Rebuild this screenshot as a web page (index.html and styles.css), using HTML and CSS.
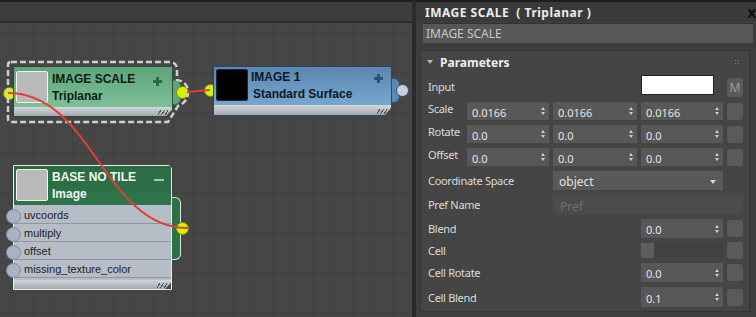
FILE: index.html
```html
<!DOCTYPE html>
<html>
<head>
    <title>Slate Material Editor</title>
    <link rel="stylesheet" href="styles.css">
</head>
<body>
    <div class="graph">
        <div class="graph-toolbar"></div>
        <div class="canvas"></div>

        <!-- input ports sit behind the node bodies -->
        <span class="port port-live port-scale-in"></span>
        <span class="port port-live port-image-in"></span>

        <div class="node node-scale">
            <div class="node-head">
                <div class="thumb"></div>
                <div class="node-title"><b>IMAGE SCALE</b><b>Triplanar</b></div>
                <span class="toggle toggle-plus"></span>
            </div>
            <div class="node-foot"><span class="hatch"></span></div>
        </div>

        <div class="node node-image">
            <div class="node-head">
                <div class="thumb thumb-black"></div>
                <div class="node-title"><b>IMAGE 1</b><b class="indent">Standard Surface</b></div>
                <span class="toggle toggle-plus"></span>
            </div>
            <div class="node-foot"><span class="hatch"></span></div>
        </div>

        <div class="tab tab-scale"></div>
        <div class="tab tab-image"></div>
        <div class="tab tab-base"></div>

        <div class="node node-base">
            <div class="node-head">
                <div class="thumb"></div>
                <div class="node-title"><b>BASE NO TILE</b><b>Image</b></div>
                <span class="toggle toggle-minus"></span>
            </div>
            <div class="ports">
                <div class="port-row">uvcoords</div>
                <div class="port-row">multiply</div>
                <div class="port-row">offset</div>
                <div class="port-row">missing_texture_color</div>
            </div>
            <div class="node-foot"><span class="hatch"></span></div>
        </div>

        <span class="port port-live port-scale-out"></span>
        <span class="port port-idle port-image-out"></span>
        <span class="port port-live port-base-out"></span>

        <svg class="wires" width="412" height="317" viewBox="0 0 412 317">
            <path class="selection" d="M11 62 H170 Q176 62 177 68 V80 Q188 82 188 92 Q188 102 178 106 L168 122 H11 Q8 122 8 119 V65 Q8 62 11 62 Z"/>
            <path class="wire" d="M187 92 L210 90"/>
            <path class="wire" d="M8 93 C92 93 104 228 188 228"/>
        </svg>
    </div>

    <div class="panel">
        <div class="panel-title">
            <span>IMAGE SCALE&nbsp;&nbsp;( Triplanar )</span>
            <b class="close">x</b>
        </div>
        <div class="name-field">IMAGE SCALE</div>

        <div class="rollout">
            <div class="rollout-head">
                <span class="caret"></span>
                <span class="rollout-name">Parameters</span>
                <span class="grip"></span>
            </div>

            <div class="params">
                <span class="lbl span-3">Input</span>
                <span class="swatch"></span>
                <span class="sq sq-m">M</span>

                <span class="lbl lbl-high">Scale</span>
                <span class="spin">0.0166</span>
                <span class="spin">0.0166</span>
                <span class="spin">0.0166</span>
                <span class="sq"></span>

                <span class="lbl lbl-high">Rotate</span>
                <span class="spin">0.0</span>
                <span class="spin">0.0</span>
                <span class="spin">0.0</span>
                <span class="sq"></span>

                <span class="lbl lbl-high">Offset</span>
                <span class="spin">0.0</span>
                <span class="spin">0.0</span>
                <span class="spin">0.0</span>
                <span class="sq"></span>

                <span class="lbl span-2">Coordinate Space</span>
                <span class="dropdown">object</span>

                <span class="lbl span-2">Pref Name</span>
                <span class="text-field">Pref</span>

                <span class="lbl span-3">Blend</span>
                <span class="spin">0.0</span>
                <span class="sq"></span>

                <span class="lbl span-3">Cell</span>
                <span class="check-area"><span class="check"></span></span>
                <span class="sq"></span>

                <span class="lbl span-3">Cell Rotate</span>
                <span class="spin">0.0</span>
                <span class="sq"></span>

                <span class="lbl span-3">Cell Blend</span>
                <span class="spin">0.1</span>
                <span class="sq"></span>
            </div>
        </div>
    </div>
</body>
</html>
```

FILE: styles.css
```css
* {
    box-sizing: border-box;
}

body {
    margin: 0;
    width: 756px;
    height: 317px;
    overflow: hidden;
    display: flex;
    background: #3e3e3e;
    font-family: "Noto Sans", sans-serif;
}

/* ---------- node graph ---------- */

.graph {
    position: relative;
    width: 412px;
    flex: none;
    display: flex;
    flex-direction: column;
}

.graph-toolbar {
    height: 23px;
    background: #3c3c3c;
    border-top: 2px solid #1e1e1e;
    border-bottom: 2px solid #2c2c2c;
}

.canvas {
    flex: 1;
    background-color: #464646;
    background-image:
        linear-gradient(90deg, rgba(0, 0, 0, 0.07) 1px, transparent 1px),
        linear-gradient(rgba(0, 0, 0, 0.07) 1px, transparent 1px);
    background-size: 20px 20px;
    background-position: 12px 9px;
}

.node {
    position: absolute;
    display: flex;
    flex-direction: column;
    font-family: "Liberation Sans", Arial, sans-serif;
}

.node-head {
    display: flex;
    align-items: flex-start;
    padding-left: 2px;
}

.thumb {
    width: 32px;
    height: 32px;
    flex: none;
    background: #b9b9b9;
    border: 1px solid #f2f2f2;
    border-radius: 2px;
}

.thumb-black {
    background: #000;
    border-color: #1a2a3a;
}

.node-title {
    display: flex;
    flex-direction: column;
    margin-left: 4px;
    font-size: 12px;
    line-height: 17px;
    white-space: nowrap;
}

.toggle {
    margin-left: auto;
    flex: none;
}

.toggle-plus {
    width: 9px;
    height: 9px;
}

.toggle-minus {
    width: 10px;
    height: 2px;
    margin-top: 10px;
    margin-right: 7px;
    background: #a9c8b3;
}

.node-foot {
    display: flex;
    justify-content: flex-end;
    align-items: flex-end;
    background: linear-gradient(#d3d7dc, #a3a9b1);
    clip-path: polygon(0 0, 100% 0, 100% 30%, calc(100% - 6px) 100%, 0 100%);
    padding: 0 4px 1px 0;
}

.hatch {
    width: 10px;
    height: 5px;
    background: repeating-linear-gradient(-55deg, transparent 0 2px, #4d535b 2px 3px);
}

/* IMAGE SCALE (selected, green) */
.node-scale {
    left: 13px;
    top: 66px;
    width: 160px;
    border: 1px solid #2f4b3b;
    border-radius: 0 4px 0 0;
}

.node-scale .node-head {
    height: 40px;
    padding-top: 4px;
    background: linear-gradient(#5ea57b, #7dbf98);
    color: #0f1d14;
}

.node-scale .toggle-plus {
    margin-top: 6px;
    margin-right: 10px;
    background:
        linear-gradient(#2e6a45, #2e6a45) center / 9px 3px no-repeat,
        linear-gradient(#2e6a45, #2e6a45) center / 3px 9px no-repeat;
}

.node-scale .node-foot {
    height: 9px;
}

/* IMAGE 1 (blue) */
.node-image {
    left: 213px;
    top: 66px;
    width: 179px;
    border: 1px solid #2e4861;
    border-radius: 0 4px 0 0;
}

.node-image .node-head {
    height: 38px;
    padding-top: 2px;
    background: linear-gradient(#5987b1, #7aa6cc);
    color: #0b1828;
}

.node-image .node-title {
    margin-left: 3px;
}

.node-image .indent {
    padding-left: 2px;
}

.node-image .toggle-plus {
    margin-top: 5px;
    margin-right: 8px;
    background:
        linear-gradient(#2f5175, #2f5175) center / 9px 3px no-repeat,
        linear-gradient(#2f5175, #2f5175) center / 3px 9px no-repeat;
}

.node-image .node-foot {
    height: 10px;
}

/* BASE NO TILE (dark green, expanded) */
.node-base {
    left: 13px;
    top: 165px;
    width: 159px;
    border: 1px solid #e8ecef;
    border-radius: 0 4px 0 0;
}

.node-base .node-head {
    height: 39px;
    padding-top: 3px;
    background: linear-gradient(#2a6b43, #2f744a);
    color: #f2f6f2;
}

.ports {
    padding: 1px 0 2px;
    background: #b6bdc7;
    font-size: 11px;
    color: #1e2126;
}

.port-row {
    position: relative;
    height: 18px;
    padding: 1px 0 0 10px;
    line-height: 16px;
    border-bottom: 1px solid #8f96a0;
}

.port-row::before {
    content: "";
    position: absolute;
    left: -8px;
    top: 3px;
    width: 13px;
    height: 13px;
    border-radius: 50%;
    background: #a7b2c4;
    border: 1px solid #7f8b9e;
}

.node-base .node-foot {
    height: 9px;
}

/* output tabs on the right edge */
.tab {
    position: absolute;
    border-radius: 0 6px 6px 0;
}

.tab-scale {
    left: 173px;
    top: 80px;
    width: 8px;
    height: 25px;
    background: #5ea77c;
    border: 1px solid #3d6b4f;
    border-left: none;
}

.tab-image {
    left: 392px;
    top: 78px;
    width: 8px;
    height: 25px;
    background: #5b89b3;
    border: 1px solid #34526f;
    border-left: none;
}

.tab-base {
    left: 172px;
    top: 197px;
    width: 9px;
    height: 63px;
    background: #2d7148;
    border: 1px solid #dfe6e1;
    border-left: none;
}

.port {
    position: absolute;
    width: 13px;
    height: 13px;
    border-radius: 50%;
}

.port-live {
    background: #d6f200;
    border: 1px solid #7e8f0c;
}

.port-idle {
    background: #c6cfdc;
    border: 1px solid #36516c;
}

.port-scale-in { left: 3px; top: 87px; }
.port-scale-out { left: 176px; top: 86px; }
.port-image-in { left: 204px; top: 84px; }
.port-image-out { left: 396px; top: 84px; }
.port-base-out { left: 176px; top: 222px; }

.wires {
    position: absolute;
    left: 0;
    top: 0;
    pointer-events: none;
}

.selection {
    fill: none;
    stroke: #cfcfcf;
    stroke-width: 2.5;
    stroke-dasharray: 6 3;
}

.wire {
    fill: none;
    stroke: #e23d38;
    stroke-width: 2;
}

/* ---------- parameter panel ---------- */

.panel {
    flex: 1;
    display: flex;
    flex-direction: column;
    border-left: 4px solid #2b2b2b;
    color: #dedede;
    font-size: 11px;
}

.panel-title {
    height: 22px;
    display: flex;
    align-items: center;
    justify-content: space-between;
    padding-left: 9px;
    background: #3a3a3a;
    border-top: 2px solid #1e1e1e;
    font-size: 12px;
    font-weight: bold;
    letter-spacing: 0.5px;
    color: #ececec;
}

.close {
    margin-right: -1px;
    font-size: 15px;
    color: #111;
    text-shadow: 0 0 1px #777;
}

.name-field {
    height: 20px;
    margin: 1px 3px 0 7px;
    padding-left: 3px;
    line-height: 19px;
    background: #575757;
    border-top: 1px solid #333;
    font-size: 12px;
    color: #c9c9c9;
}

.rollout {
    height: 262px;
    margin: 7px 6px 0 4px;
    background: #454545;
    border: 1px solid #363636;
}

.rollout-head {
    height: 22px;
    display: flex;
    align-items: center;
    padding: 0 8px 0 6px;
}

.caret {
    width: 0;
    height: 0;
    border-left: 3px solid transparent;
    border-right: 3px solid transparent;
    border-top: 4px solid #b5b5b5;
    margin-right: 7px;
}

.rollout-name {
    font-size: 12px;
    font-weight: bold;
    color: #ececec;
}

.grip {
    margin-left: auto;
    width: 7px;
    height: 7px;
    background: radial-gradient(circle, #7c7c7c 0.8px, transparent 1px) 0 0 / 3px 3px;
}

.params {
    display: grid;
    grid-template-columns: 35px 82px 84px 82px 16px;
    grid-template-rows: 22px 18px 18px 18px 19px 19px 19px 15px 19px 20px;
    column-gap: 4px;
    row-gap: 5px;
    margin-top: 2px;
    padding-left: 7px;
}

.lbl {
    align-self: center;
    white-space: nowrap;
    letter-spacing: -0.3px;
    color: #dcdcdc;
}

.lbl-high {
    align-self: start;
    margin-top: -1px;
}

.span-2 { grid-column: 1 / 3; }
.span-3 { grid-column: 1 / 4; }

.swatch {
    grid-column: 4;
    width: 73px;
    height: 20px;
    background: #fff;
    border: 1px solid #222;
}

.sq {
    grid-column: 5;
    align-self: center;
    height: 17px;
    border-radius: 3px;
    background: #5a5a5a;
}

.sq-m {
    align-self: end;
    height: 19px;
    text-align: center;
    line-height: 19px;
    font-size: 12px;
    color: #9c9c9c;
}

.spin {
    position: relative;
    display: flex;
    align-items: center;
    padding: 2px 0 0 5px;
    background: #585858;
    color: #e6e6e6;
    font-size: 11px;
}

.spin::before,
.spin::after {
    content: "";
    position: absolute;
    right: 4px;
    border-left: 2.5px solid transparent;
    border-right: 2.5px solid transparent;
}

.spin::before {
    top: calc(50% - 4px);
    border-bottom: 3px solid #cfcfcf;
}

.spin::after {
    top: calc(50% + 1px);
    border-top: 3px solid #cfcfcf;
}

.params > .spin:nth-last-child(2) {
    grid-column: 4;
}

.dropdown {
    grid-column: 3 / 5;
    position: relative;
    display: flex;
    align-items: center;
    padding: 1px 0 0 6px;
    background: #595959;
    color: #e3e3e3;
    font-size: 12px;
}

.dropdown::after {
    content: "";
    position: absolute;
    right: 7px;
    top: 9px;
    border-left: 3px solid transparent;
    border-right: 3px solid transparent;
    border-top: 4px solid #d6d6d6;
}

.text-field {
    grid-column: 3 / 6;
    display: flex;
    align-items: center;
    padding: 3px 0 0 7px;
    background: #4b4b4b;
    color: #6e6e6e;
    font-size: 12px;
}

.check-area {
    grid-column: 4;
    background: #414141;
}

.check {
    display: block;
    width: 13px;
    height: 15px;
    background: #5d5d5d;
}
```
